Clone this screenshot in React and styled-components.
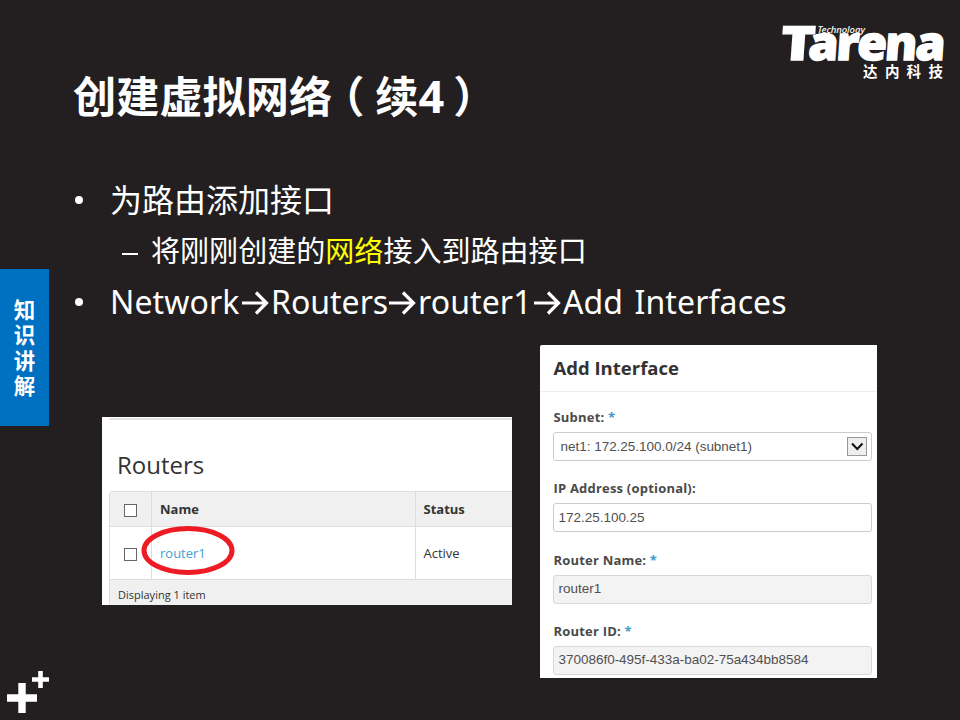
import React from 'react';
import styled, { createGlobalStyle } from 'styled-components';

const GlobalStyle = createGlobalStyle`
  body { margin: 0; background: #231f20; }
  *, *::before, *::after { box-sizing: border-box; }
`;

const Slide = styled.main`
  width: 960px;
  height: 720px;
  overflow: hidden;
  display: grid;
  grid-template-columns: 49px 1fr;
  background: #231f20;
  color: #fff;
  font-family: 'Noto Sans', 'Noto Sans CJK SC', sans-serif;
`;

const Rail = styled.aside`
  display: flex;
  flex-direction: column;
  justify-content: space-between;
  padding: 269px 0 6px;
`;

const SectionTab = styled.div`
  height: 157px;
  background: #0070c0;
  display: flex;
  flex-direction: column;
  align-items: center;
  padding-top: 27px;
  font: 700 21.5px/25.3px 'Noto Sans CJK SC', sans-serif;
`;

const PlusMark = styled.svg`
  display: block;
  width: 49px;
  height: 44px;
`;

const Content = styled.section`
  display: flex;
  flex-direction: column;
  min-width: 0;
`;

const Header = styled.header`
  height: 176px;
  display: flex;
  justify-content: space-between;
  align-items: flex-start;
`;

const Title = styled.h1`
  margin: 62px 0 0 24px;
  font: 700 43.2px/64px 'Noto Sans CJK SC', sans-serif;
  white-space: nowrap;
`;

const Paren = styled.span`
  margin-left: ${(p) => p.$shift}px;
  margin-right: ${(p) => -p.$shift}px;
`;

const Digit = styled.span`
  font-family: 'Open Sans', sans-serif;
  font-size: 45px;
`;

const Logo = styled.svg`
  display: block;
  width: 190px;
  height: 75px;
  margin-top: 15px;
`;

const Outline = styled.div`
  display: flex;
  flex-direction: column;
`;

const Point = styled.div`
  display: flex;
  align-items: center;
  height: ${(p) => p.$height}px;
  padding: 0 0 2px 26px;
  font-size: 32px;
  line-height: 50px;
  white-space: nowrap;
`;

const Bullet = styled.span`
  width: 8px;
  height: 8px;
  border-radius: 50%;
  background: #fff;
  margin: 0 27px 0 0;
`;

const SubPoint = styled(Point)`
  padding-left: 73px;
  font-size: 29.05px;
`;

const Dash = styled.span`
  width: 16px;
  height: 2px;
  background: #fff;
  margin: 7px 13px 0 0;
`;

const Highlight = styled.span`
  color: #ff0;
`;

const Step = styled.span`
  width: ${(p) => p.$width}px;
  letter-spacing: ${(p) => p.$track || 0}px;
  word-spacing: ${(p) => p.$gap || 0}px;
`;

const ArrowIcon = styled.svg`
  width: 28px;
  height: 24px;
  margin: 2px 2px 0 0;
`;

const Arrow = () => (
  <ArrowIcon viewBox="0 0 28 24" fill="none" stroke="#fff" strokeWidth="3.2">
    <path d="M1 12H25M15 1.500L25.500 12L15 22.500" />
  </ArrowIcon>
);

const Shots = styled.div`
  display: flex;
  align-items: flex-start;
  gap: 28px;
  padding: 16px 0 0 53px;
`;

const RoutersPanel = styled.section`
  width: 410px;
  height: 188px;
  margin-top: 72px;
  padding: 1px 0 0 7px;
  overflow: hidden;
  background: #fff;
  color: #333;
  font-family: 'Open Sans', sans-serif;
`;

const PanelTitle = styled.h2`
  margin: 0;
  height: 73px;
  border-top: 2px solid #e2e2e2;
  padding: 28px 0 0 8px;
  font-size: 24px;
  font-weight: 400;
  line-height: 34px;
`;

const RouterTable = styled.div`
  border: 1px solid #ddd;
  border-width: 1px 0 0 1px;
  border-radius: 4px 0 0 0;
  overflow: hidden;
`;

const TableRow = styled.div`
  display: grid;
  grid-template-columns: 42px 264px 1fr;
  height: ${(p) => (p.$head ? 35 : 53)}px;
  background: ${(p) => (p.$head ? '#f0f0f0' : '#fff')};
  border-bottom: 1px solid #ddd;
  font-size: 13px;
  font-weight: ${(p) => (p.$head ? 700 : 400)};
`;

const Cell = styled.div`
  position: relative;
  display: flex;
  align-items: center;
  padding-left: ${(p) => (p.$check ? 14 : 8)}px;
  border-right: 1px solid #ddd;
  &:last-child { border-right: 0; padding-left: 7.5px; }
`;

const CheckBox = styled.span`
  width: 13px;
  height: 13px;
  margin-top: 3px;
  border: 1px solid #666;
  background: #fff;
`;

const RouterLink = styled.a`
  color: #43a0d5;
`;

const RedRing = styled.svg`
  position: absolute;
  left: -11px;
  top: -2px;
  width: 94px;
  height: 51px;
  z-index: 1;
`;

const TableFooter = styled.div`
  height: 30px;
  padding-left: 8px;
  background: #f0f0f0;
  font-size: 11px;
  line-height: 30px;
`;

const Dialog = styled.section`
  width: 337px;
  height: 333px;
  overflow: hidden;
  border-radius: 2px 0 0 0;
  background: #fff;
  color: #4a4a4a;
  font-family: 'Open Sans', sans-serif;
`;

const DialogTitle = styled.h2`
  margin: 0 0 16px;
  height: 47px;
  padding-left: 13.5px;
  border-bottom: 1px solid #eee;
  color: #333;
  font-size: 18.5px;
  font-weight: 700;
  line-height: 46px;
`;

const Field = styled.div`
  height: 71.3px;
  padding: 0 5px 0 13px;
`;

const Label = styled.div`
  height: 24px;
  padding-left: 0.5px;
  font-size: 13px;
  font-weight: 700;
  line-height: 18px;
  letter-spacing: 0.2px;
`;

const Required = styled.span`
  color: #3c9acb;
`;

const Control = styled.div`
  display: flex;
  align-items: center;
  justify-content: space-between;
  height: 29px;
  padding: 0 4px ${(p) => (p.$disabled ? 2 : 0)}px ${(p) => (p.$select ? 6.5 : 4.5)}px;
  border: 1px solid ${(p) => (p.$disabled ? '#d8d8d8' : '#ccc')};
  border-radius: 3px;
  background: ${(p) => (p.$disabled ? '#f3f3f3' : '#fff')};
  color: #505050;
  font: 13.5px 'Liberation Sans', sans-serif;
  letter-spacing: -0.02px;
`;

const SelectButton = styled.svg`
  width: 20px;
  height: 20px;
`;

const fields = [
  { label: 'Subnet:', required: true, value: 'net1: 172.25.100.0/24 (subnet1)', select: true },
  { label: 'IP Address (optional):', value: '172.25.100.25' },
  { label: 'Router Name:', required: true, value: 'router1', disabled: true },
  { label: 'Router ID:', required: true, value: '370086f0-495f-433a-ba02-75a434bb8584', disabled: true },
];

function TarenaLogo() {
  return (
    <Logo viewBox="0 0 190 75" fill="#fff">
      <g transform="translate(10 45.200) skewX(-4)" fontFamily="Open Sans" fontWeight="800" fontSize="47" stroke="#fff" strokeWidth="1.4">
        <text x="0" y="0" textLength="34" lengthAdjust="spacingAndGlyphs">T</text>
        <text x="27.500" y="0" textLength="135" lengthAdjust="spacingAndGlyphs" letterSpacing="-2">arena</text>
      </g>
      <text x="47.500" y="17.500" fontFamily="Noto Sans" fontStyle="italic" fontWeight="500" fontSize="9.500" textLength="47.500">Technology</text>
      <text fontFamily="Noto Sans CJK SC" fontWeight="700" fontSize="14.500" y="62">
        <tspan x="93">达</tspan><tspan x="115">内</tspan><tspan x="136.500">科</tspan><tspan x="158.500">技</tspan>
      </text>
    </Logo>
  );
}

export default function App() {
  return (
    <>
      <GlobalStyle />
      <Slide>
        <Rail>
          <SectionTab>
            {[...'知识讲解'].map((c) => <span key={c}>{c}</span>)}
          </SectionTab>
          <PlusMark viewBox="0 0 49 44" fill="#fff">
            <path d="M18.300 13h7.400v11.300H37v7.400H25.700V43h-7.400V31.700H7v-7.400h11.300z" />
            <path d="M38.200 1h4.600v6.200H49v4.600h-6.200V18h-4.600v-6.200H32V7.200h6.200z" />
          </PlusMark>
        </Rail>
        <Content>
          <Header>
            <Title>
              创建虚拟网络<Paren $shift={-11}>（</Paren>续<Digit>4</Digit><Paren $shift={9}>）</Paren>
            </Title>
            <TarenaLogo />
          </Header>
          <Outline>
            <Point $height={50}><Bullet />为路由添加接口</Point>
            <SubPoint $height={51}>
              <Dash />将刚刚创建的<Highlight>网络</Highlight>接入到路由接口
            </SubPoint>
            <Point $height={52}>
              <Bullet />
              <Step $width={131} $track={0.1}>Network</Step><Arrow />
              <Step $width={117}>Routers</Step><Arrow />
              <Step $width={115} $track={0.1}>router1</Step><Arrow />
              <Step $width={224} $track={0.1} $gap={3}>Add Interfaces</Step>
            </Point>
          </Outline>
          <Shots>
            <RoutersPanel>
              <PanelTitle>Routers</PanelTitle>
              <RouterTable>
                <TableRow $head>
                  <Cell $check><CheckBox /></Cell>
                  <Cell>Name</Cell>
                  <Cell>Status</Cell>
                </TableRow>
                <TableRow>
                  <Cell $check><CheckBox /></Cell>
                  <Cell>
                    <RouterLink>router1</RouterLink>
                    <RedRing viewBox="0 0 94 51" fill="none" stroke="#ed1c24" strokeWidth="5">
                      <ellipse cx="47" cy="25.500" rx="44" ry="22" />
                    </RedRing>
                  </Cell>
                  <Cell>Active</Cell>
                </TableRow>
                <TableFooter>Displaying 1 item</TableFooter>
              </RouterTable>
            </RoutersPanel>
            <Dialog>
              <DialogTitle>Add Interface</DialogTitle>
              {fields.map((f) => (
                <Field key={f.label}>
                  <Label>{f.label} {f.required && <Required>*</Required>}</Label>
                  <Control $select={f.select} $disabled={f.disabled}>
                    {f.value}
                    {f.select && (
                      <SelectButton viewBox="0 0 20 20" fill="none">
                        <rect x=".5" y=".5" width="19" height="18" fill="#eee" stroke="#999" />
                        <path d="M5 6.500L10.300 12L15.500 6.500" stroke="#111" strokeWidth="2" />
                      </SelectButton>
                    )}
                  </Control>
                </Field>
              ))}
            </Dialog>
          </Shots>
        </Content>
      </Slide>
    </>
  );
}
